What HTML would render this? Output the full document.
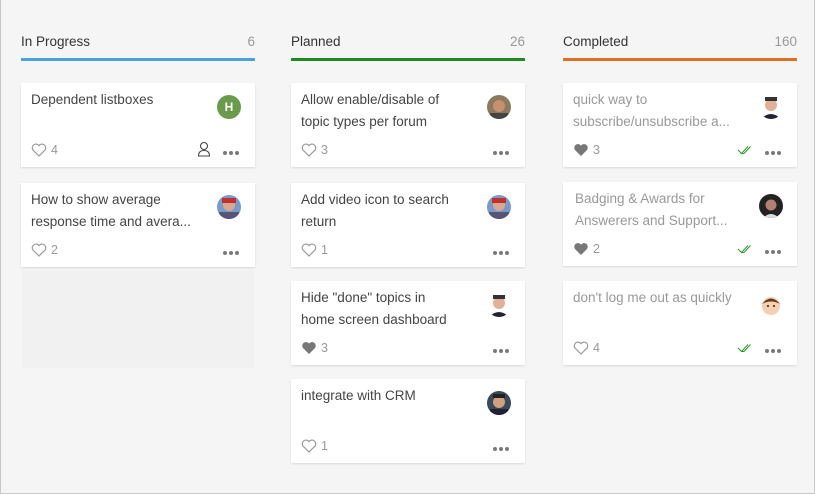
<!DOCTYPE html>
<html><head><meta charset="utf-8"><style>
*{margin:0;padding:0;box-sizing:border-box}
body{width:815px;height:494px;overflow:hidden;background:#f5f5f5;font-family:"Liberation Sans",sans-serif;position:relative}
.frame{position:absolute;left:0;top:0;width:815px;height:494px;border:1px solid #c8c8c8;border-top:none}
.hd{position:absolute;top:34px;font-size:13.5px;color:#333;height:16px}
.hd .n{position:absolute;right:0;top:0;color:#999}
.bar{position:absolute;top:58px;height:3px}
.card{position:absolute;background:#fff;width:234px;box-shadow:0 1px 2px rgba(0,0,0,.12)}
.t{position:absolute;left:10px;top:6px;width:166px;font-size:13.5px;line-height:22px;color:#444}
.t.g{color:#999}
.av{position:absolute;right:14px;top:12px;width:24px;height:24px;border-radius:50%;overflow:hidden}
.ft{position:absolute;left:10px;bottom:10px;font-size:12.5px;color:#999;display:flex;align-items:center;gap:4px}
.dots{position:absolute;right:16px;bottom:12px;display:flex;gap:2px}
.dots i{width:4px;height:4px;border-radius:50%;background:#7a7a7a;display:block}
.chk{position:absolute;right:44px;bottom:12px}
.usr{position:absolute;right:44px;bottom:10px}
</style></head><body>
<div class="frame"></div>

<div class="hd" style="left:21px;width:234px">In Progress<span class="n">6</span></div>
<div class="bar" style="left:21px;width:234px;background:#4aa3df"></div>
<div class="hd" style="left:291px;width:234px">Planned<span class="n">26</span></div>
<div class="bar" style="left:291px;width:234px;background:#1e8a1e"></div>
<div class="hd" style="left:563px;width:234px">Completed<span class="n">160</span></div>
<div class="bar" style="left:563px;width:234px;background:#e07020"></div>

<svg width="0" height="0" style="position:absolute"><defs>
<symbol id="ho" viewBox="0 0 16 14"><path d="M8 13 L2 7 A3.3 3.3 0 0 1 8 2.6 A3.3 3.3 0 0 1 14 7 Z" fill="none" stroke="#999" stroke-width="1.2"/></symbol>
<symbol id="hf" viewBox="0 0 16 14"><path d="M8 13 L2 7 A3.3 3.3 0 0 1 8 2.6 A3.3 3.3 0 0 1 14 7 Z" fill="#777"/></symbol>
<symbol id="ck" viewBox="0 0 16 10"><path d="M1 5 L4.5 8.5 L11 1.5 M7 8.5 L13.5 1.5 M4.5 8.5 L7 8.5" fill="none" stroke="#2a9a2a" stroke-width="1"/></symbol>
</defs></svg>

<!-- col1 -->
<div class="card" style="left:21px;top:83px;height:84px">
<div class="t">Dependent listboxes</div>
<div class="av" style="background:#6a9a4c;color:#fff;font-size:12px;font-weight:bold;text-align:center;line-height:24px">H</div>
<div class="ft"><svg width="16" height="14"><use href="#ho"/></svg>4</div>
<svg class="usr" width="14" height="16" viewBox="0 0 14 16"><circle cx="7" cy="5" r="3.5" fill="none" stroke="#444" stroke-width="1.1"/><path d="M1.5 15 Q1.5 9.5 7 9.5 Q12.5 9.5 12.5 15 Z" fill="none" stroke="#444" stroke-width="1.1"/></svg>
<div class="dots"><i></i><i></i><i></i></div></div>
<div class="card" style="left:21px;top:183px;height:84px">
<div class="t">How to show average response time and avera...</div>
<div class="av" style="background:#7a9ac8"><svg width="24" height="24"><circle cx="12" cy="10" r="6" fill="#d8a890"/><rect x="5" y="3" width="14" height="5" fill="#c03030"/><rect x="2" y="17" width="20" height="8" fill="#557"/></svg></div>
<div class="ft"><svg width="16" height="14"><use href="#ho"/></svg>2</div>
<div class="dots"><i></i><i></i><i></i></div></div>
<div style="position:absolute;left:22px;top:270px;width:232px;height:98px;background:#f1f1f1"></div>

<!-- col2 -->
<div class="card" style="left:291px;top:83px;height:84px">
<div class="t">Allow enable/disable of topic types per forum</div>
<div class="av" style="background:#8a7a60"><svg width="24" height="24"><circle cx="12" cy="11" r="6" fill="#c89070"/><rect x="3" y="18" width="18" height="6" fill="#444"/></svg></div>
<div class="ft"><svg width="16" height="14"><use href="#ho"/></svg>3</div>
<div class="dots"><i></i><i></i><i></i></div></div>
<div class="card" style="left:291px;top:183px;height:84px">
<div class="t">Add video icon to search return</div>
<div class="av" style="background:#7a9ac8"><svg width="24" height="24"><circle cx="12" cy="10" r="6" fill="#d8a890"/><rect x="5" y="3" width="14" height="5" fill="#c03030"/><rect x="2" y="17" width="20" height="8" fill="#557"/></svg></div>
<div class="ft"><svg width="16" height="14"><use href="#ho"/></svg>1</div>
<div class="dots"><i></i><i></i><i></i></div></div>
<div class="card" style="left:291px;top:281px;height:84px">
<div class="t" style="width:155px">Hide "done" topics in home screen dashboard</div>
<div class="av" style="background:#fff"><svg width="24" height="24"><circle cx="12" cy="10" r="6" fill="#e0b098"/><rect x="6" y="2" width="12" height="4" fill="#333"/><path d="M2 24 Q12 14 22 24Z" fill="#223"/></svg></div>
<div class="ft"><svg width="16" height="14"><use href="#hf"/></svg>3</div>
<div class="dots"><i></i><i></i><i></i></div></div>
<div class="card" style="left:291px;top:379px;height:84px">
<div class="t">integrate with CRM</div>
<div class="av" style="background:#3a4a5a"><svg width="24" height="24"><circle cx="12" cy="11" r="6" fill="#d0a080"/><rect x="6" y="3" width="12" height="4" fill="#222"/><rect x="3" y="18" width="18" height="6" fill="#223"/></svg></div>
<div class="ft"><svg width="16" height="14"><use href="#ho"/></svg>1</div>
<div class="dots"><i></i><i></i><i></i></div></div>

<!-- col3 -->
<div class="card" style="left:563px;top:83px;height:84px">
<div class="t g">quick way to subscribe/unsubscribe a...</div>
<div class="av" style="background:#fff"><svg width="24" height="24"><circle cx="12" cy="10" r="6" fill="#e0b098"/><rect x="6" y="2" width="12" height="4" fill="#333"/><path d="M2 24 Q12 14 22 24Z" fill="#223"/></svg></div>
<div class="ft"><svg width="16" height="14"><use href="#hf"/></svg>3</div>
<svg class="chk" width="16" height="10"><use href="#ck"/></svg>
<div class="dots"><i></i><i></i><i></i></div></div>
<div class="card" style="left:563px;top:182px;height:84px">
<div class="t g" style="left:12px">Badging &amp; Awards for Answerers and Support...</div>
<div class="av" style="background:#222"><svg width="24" height="24"><circle cx="12" cy="11" r="5.5" fill="#b08070"/><path d="M4 24 Q12 16 20 24Z" fill="#ddd"/></svg></div>
<div class="ft"><svg width="16" height="14"><use href="#hf"/></svg>2</div>
<svg class="chk" width="16" height="10"><use href="#ck"/></svg>
<div class="dots"><i></i><i></i><i></i></div></div>
<div class="card" style="left:563px;top:281px;height:84px">
<div class="t g">don't log me out as quickly</div>
<div class="av" style="background:#fff"><svg width="24" height="24"><circle cx="12" cy="13" r="9" fill="#f5d0b0"/><path d="M3 11 Q12 0 21 11 Q12 6 3 11Z" fill="#6a3a1a"/><circle cx="9" cy="13" r="1" fill="#222"/><circle cx="15" cy="13" r="1" fill="#222"/></svg></div>
<div class="ft"><svg width="16" height="14"><use href="#ho"/></svg>4</div>
<svg class="chk" width="16" height="10"><use href="#ck"/></svg>
<div class="dots"><i></i><i></i><i></i></div></div>
</body></html>
